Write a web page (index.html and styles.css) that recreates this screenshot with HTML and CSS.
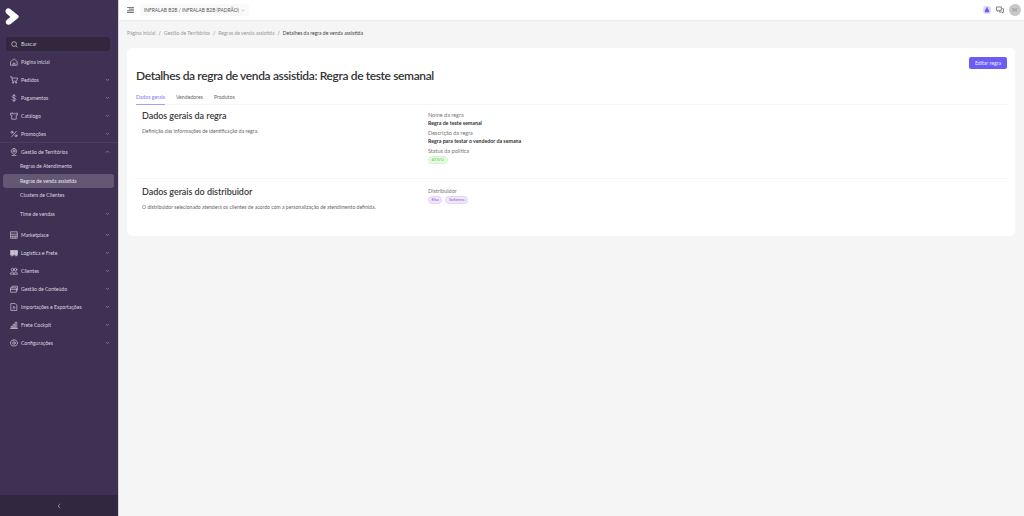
FILE: index.html
```html
<!DOCTYPE html>
<html lang="pt-BR">
<head>
<meta charset="utf-8">
<title>Detalhes da regra de venda assistida</title>
<link rel="stylesheet" href="styles.css">
</head>
<body>
<div class="app">
  <aside class="sidebar">
    <div class="logo-row">
      <svg class="logo" viewBox="0 0 14 17"><path d="M1.2 1.2C2.4-.1 4.200.2 5.200 1.100L12.800 6.900C14 8 14 9.300 12.800 10.300L6 15.800C4.600 17 2.600 17 1.500 15.900C.3 14.600.5 13 1.700 12L5.400 8.900 1.500 5.600C.2 4.500.1 2.400 1.200 1.200Z" fill="#fff"/></svg>
    </div>
    <div class="search">
      <svg class="ico-s" viewBox="0 0 10 10"><circle cx="4.400" cy="4.400" r="3.400"/><path d="M7 7l2.200 2.200"/></svg>
      <span>Buscar</span>
    </div>
    <nav class="nav">
      <a class="item"><svg class="ico" viewBox="0 0 10 10"><path d="M1 4.500 5 1l4 3.500V9H1Z"/><path d="M3.800 9V6.500h2.400V9"/></svg><span class="lbl">Página inicial</span></a>
      <a class="item"><svg class="ico" viewBox="0 0 10 10"><path d="M.5 1h1.700l1 5.500h5L9.500 2.500H2.500"/><circle cx="3.700" cy="8.400" r=".7"/><circle cx="7.500" cy="8.400" r=".7"/></svg><span class="lbl">Pedidos</span><svg class="chev" viewBox="0 0 6 4"><path d="M1 1l2 2 2-2"/></svg></a>
      <a class="item"><svg class="ico" viewBox="0 0 10 10"><path d="M7.200 2.800C6.800 2 6 1.700 5 1.700c-1.300 0-2.200.6-2.200 1.600C2.800 5.500 7.400 4.500 7.400 6.700c0 1-1 1.600-2.400 1.600-1.100 0-2-.4-2.400-1.200M5 .3v9.400"/></svg><span class="lbl">Pagamentos</span><svg class="chev" viewBox="0 0 6 4"><path d="M1 1l2 2 2-2"/></svg></a>
      <a class="item"><svg class="ico" viewBox="0 0 10 10"><path d="M3.200 1.500H.7v2.300h1.500V9h5.600V3.800h1.500V1.500H6.800C6.500 3 3.500 3 3.200 1.500Z"/></svg><span class="lbl">Catálogo</span><svg class="chev" viewBox="0 0 6 4"><path d="M1 1l2 2 2-2"/></svg></a>
      <a class="item item-last"><svg class="ico" viewBox="0 0 10 10"><path d="M8 1.500 2 8.500"/><circle cx="2.500" cy="2.800" r="1.300"/><circle cx="7.500" cy="7.200" r="1.300"/></svg><span class="lbl">Promoções</span><svg class="chev" viewBox="0 0 6 4"><path d="M1 1l2 2 2-2"/></svg></a>
      <a class="item"><svg class="ico" viewBox="0 0 10 10"><path d="M5 .7c2.100 0 3.400 1.500 3.400 3.200C8.400 5.800 6.700 7 5 8 3.300 7 1.600 5.800 1.600 3.900 1.600 2.200 2.900.7 5 .7Z"/><circle cx="5" cy="3.800" r="1.300"/><path d="M2.500 9.300h5"/></svg><span class="lbl">Gestão de Territórios</span><svg class="chev" viewBox="0 0 6 4"><path d="M1 3l2-2 2 2"/></svg></a>
      <div class="subs">
        <a class="sub">Regras de Atendimento</a>
        <a class="sub sub-active">Regras de venda assistida</a>
        <a class="sub">Clusters de Clientes</a>
        <a class="item item-sub"><span class="lbl">Time de vendas</span><svg class="chev" viewBox="0 0 6 4"><path d="M1 1l2 2 2-2"/></svg></a>
      </div>
      <a class="item"><svg class="ico" viewBox="0 0 10 10"><path d="M1 1h8v8H1ZM1 4h8M1 6.500h8M3.500 6.500V9M6.500 6.500V9"/></svg><span class="lbl">Marketplace</span><svg class="chev" viewBox="0 0 6 4"><path d="M1 1l2 2 2-2"/></svg></a>
      <a class="item"><svg class="ico" viewBox="0 0 10 10"><path d="M.5 2h4.500v5H.5ZM5.500 2h4v5h-4Z" fill="#c9c3d3"/><circle cx="2.500" cy="7.900" r="1"/><circle cx="7.500" cy="7.900" r="1"/></svg><span class="lbl">Logística e Frete</span><svg class="chev" viewBox="0 0 6 4"><path d="M1 1l2 2 2-2"/></svg></a>
      <a class="item"><svg class="ico" viewBox="0 0 10 10"><circle cx="3.200" cy="3.300" r="1.700"/><circle cx="6.900" cy="3.300" r="1.700"/><path d="M.5 8.500c0-3 4.500-3 4.500 0ZM5 8.500c0-3 4.500-3 4.500 0Z"/></svg><span class="lbl">Clientes</span><svg class="chev" viewBox="0 0 6 4"><path d="M1 1l2 2 2-2"/></svg></a>
      <a class="item"><svg class="ico" viewBox="0 0 10 10"><path d="M1 3.500h7V9H1ZM2.500 3.500V1.500h7v5H8M1 5.500h7"/></svg><span class="lbl">Gestão de Conteúdo</span><svg class="chev" viewBox="0 0 6 4"><path d="M1 1l2 2 2-2"/></svg></a>
      <a class="item"><svg class="ico" viewBox="0 0 10 10"><path d="M1.500.7H6.500L8.500 2.700V9.300H1.500ZM5 7.500V4.500M3.800 5.700 5 4.500l1.200 1.200"/></svg><span class="lbl">Importações e Exportações</span><svg class="chev" viewBox="0 0 6 4"><path d="M1 1l2 2 2-2"/></svg></a>
      <a class="item"><svg class="ico" viewBox="0 0 10 10"><path d="M.7 9.300h8.600M1.500 9.300V6.500h2v2.800M4 9.300V4h2v5.300M6.500 9.300V1.500h2v7.800"/></svg><span class="lbl">Frete Cockpit</span><svg class="chev" viewBox="0 0 6 4"><path d="M1 1l2 2 2-2"/></svg></a>
      <a class="item"><svg class="ico" viewBox="0 0 10 10"><circle cx="5" cy="5" r="1.600"/><path d="M5 .7l1 .9 1.500-.2.600 1.400 1.300.8-.4 1.400.4 1.400-1.300.8-.6 1.400-1.500-.2-1 .9-1-.9-1.500.2-.6-1.400-1.300-.8.4-1.400-.4-1.400 1.300-.8.6-1.400 1.500.2Z"/></svg><span class="lbl">Configurações</span><svg class="chev" viewBox="0 0 6 4"><path d="M1 1l2 2 2-2"/></svg></a>
    </nav>
    <div class="collapse"><svg class="collapse-ico" viewBox="0 0 5 8"><path d="M4 1 1.300 4 4 7"/></svg></div>
  </aside>
  <div class="main">
    <header class="topbar">
      <svg class="menu" viewBox="0 0 8 7"><path d="M0 .5h8M2 2.500h6M0 4.500h8M0 6.500h8"/></svg>
      <div class="tenant"><span>INFRALAB B2B / INFRALAB B2B (PADRÃO)</span><svg class="tenant-chev" viewBox="0 0 6 4"><path d="M1 1l2 2 2-2"/></svg></div>
      <div class="top-right">
        <svg class="top-ico" viewBox="0 0 10 10"><rect x="0" y="0" width="10" height="10" rx="3" fill="#dcdafc"/><path d="M2 7.800 3 4.200C3.300 3 6.700 3 7 4.200L8 7.800Z" fill="#6c63d9"/><circle cx="5" cy="2.800" r="1.100" fill="#6c63d9"/></svg>
        <svg class="top-ico chat" viewBox="0 0 10 10"><path d="M.7 1.200h6v4.200H3L1.500 6.800V5.400H.7Z"/><path d="M7.800 3.300h1.500v4.200h-.8v1.200L7.200 7.500H4V6.300"/></svg>
        <div class="avatar">M</div>
      </div>
    </header>
    <main class="content">
      <div class="crumbs">
        <span>Página inicial</span><i>/</i><span>Gestão de Territórios</span><i>/</i><span>Regras de venda assistida</span><i>/</i><b>Detalhes da regra de venda assistida</b>
      </div>
      <section class="card">
        <div class="card-actions"><button class="btn">Editar regra</button></div>
        <h1 class="title">Detalhes da regra de venda assistida: Regra de teste semanal</h1>
        <div class="tabs">
          <span class="tab tab-active">Dados gerais</span>
          <span class="tab">Vendedores</span>
          <span class="tab">Produtos</span>
        </div>
        <div class="block block-first">
          <div class="col-left">
            <h2 class="h2">Dados gerais da regra</h2>
            <p class="desc">Definição das informações de identificação da regra.</p>
          </div>
          <div class="col-right">
            <div class="k">Nome da regra</div>
            <div class="v">Regra de teste semanal</div>
            <div class="k">Descrição da regra</div>
            <div class="v">Regra para testar o vendedor da semana</div>
            <div class="k">Status da política</div>
            <div class="tags"><span class="tag tag-green">ATIVO</span></div>
          </div>
        </div>
        <div class="block">
          <div class="col-left">
            <h2 class="h2">Dados gerais do distribuidor</h2>
            <p class="desc">O distribuidor selecionado atenderá os clientes de acordo com a personalização de atendimento definida.</p>
          </div>
          <div class="col-right">
            <div class="k">Distribuidor</div>
            <div class="tags"><span class="tag tag-purple">Elsa</span><span class="tag tag-purple">Sofarma</span></div>
          </div>
        </div>
      </section>
    </main>
  </div>
</div>
</body>
</html>
```
FILE: styles.css
```css
* { box-sizing: border-box; }
html, body { margin: 0; height: 100%; }
body { font-family: Lato, "Liberation Sans", sans-serif; background: #f5f5f5; color: #333; overflow: hidden; }
.app { display: flex; height: 516px; }

.sidebar { width: 119px; flex: none; display: flex; flex-direction: column; background: #3f3154; border-right: 1px solid #d9d6de; }
.logo-row { height: 37px; padding: 8px 0 0 5px; flex: none; }
.logo { width: 14px; height: 17px; display: block; }
.search { flex: none; margin: 0 8px 0 6px; height: 14px; background: #31273f; border-radius: 3px; display: flex; align-items: center; gap: 3px; padding-left: 5px; font-size: 5.300px; color: #d5d0dc; }
.ico-s { width: 7px; height: 7px; fill: none; stroke: #d5d0dc; stroke-width: 1; }
.nav { flex: 1; padding-top: 2px; display: flex; flex-direction: column; }
.item { height: 18px; display: flex; align-items: center; padding: 0 8px 0 10px; font-size: 5.100px; color: #d8d4df; flex: none; }
.item-last { border-bottom: 1px solid #4a3d5e; }
.ico { width: 8px; height: 8px; margin-right: 3px; flex: none; fill: none; stroke: #c9c3d3; stroke-width: .9; stroke-linejoin: round; stroke-linecap: round; }
.lbl { flex: 1; white-space: nowrap; }
.chev { width: 5px; height: 3.500px; fill: none; stroke: #8a8097; stroke-width: 1; flex: none; }
.subs { display: flex; flex-direction: column; margin: -2px 0 3px; }
.sub { height: 14.500px; margin: 0 4px 0 3px; padding-left: 17px; display: flex; align-items: center; font-size: 5.100px; color: #d8d4df; border-radius: 3px; }
.sub-active { background: #625873; color: #e6e3ea; }
.item-sub { padding-left: 20px; margin-top: 2px; }
.collapse { flex: none; height: 21px; background: #31283f; display: flex; align-items: center; justify-content: center; }
.collapse-ico { width: 4px; height: 6px; fill: none; stroke: #a59eb0; stroke-width: 1; }

.main { flex: 1; min-width: 0; display: flex; flex-direction: column; }
.topbar { height: 20px; flex: none; background: #fff; box-shadow: 0 1px 2px rgba(0,0,0,.05); display: flex; align-items: center; padding: 0 3.500px 0 8px; }
.menu { width: 7px; height: 6px; fill: none; stroke: #444; stroke-width: .9; margin-right: 6px; }
.tenant { height: 12px; background: #f9f9f9; border-radius: 3px; display: flex; align-items: center; gap: 2px; padding: 0 4px; font-size: 4.850px; color: #555; white-space: nowrap; }
.tenant-chev { width: 4px; height: 3px; fill: none; stroke: #999; stroke-width: .8; }
.top-right { margin-left: auto; display: flex; align-items: center; gap: 5px; }
.top-ico { width: 8px; height: 8px; display: block; }
.chat { fill: none; stroke: #555; stroke-width: .9; }
.avatar { width: 12px; height: 12px; border-radius: 50%; background: #c8c8c8; color: #888; font-size: 5px; display: flex; align-items: center; justify-content: center; }

.content { flex: 1; padding: 9px 9px 0 8px; }
.crumbs { height: 19px; display: flex; align-items: center; gap: 3px; font-size: 5.050px; color: #999; white-space: nowrap; padding-bottom: 11px; }
.crumbs i { font-style: normal; color: #777; }
.crumbs b { font-weight: 400; color: #444; }
.card { background: #fff; border-radius: 5px; height: 188px; padding: 9px 8px 0 9px; }
.card-actions { display: flex; justify-content: flex-end; height: 12px; }
.btn { border: 0; background: #6c5cf6; color: #f0eeff; font: 5.200px Lato, sans-serif; width: 38px; height: 12px; border-radius: 2px; padding: 0; }
.title { margin: 0; font: 600 12px/14px Lato, sans-serif; color: #333; height: 18px; letter-spacing: -.37px; white-space: nowrap; }
.tabs { display: flex; border-bottom: 1px solid #f5f5f5; height: 18px; gap: 11px; }
.tab { font-size: 5.200px; color: #666; display: flex; align-items: center; padding-top: 2px; margin-bottom: -1px; white-space: nowrap; }
.tab-active { color: #8478f0; border-bottom: 1px solid #a79ff5; width: 29px; justify-content: center; }
.block { display: flex; border-top: 1px solid #f5f5f5; height: 60px; padding: 7px 0 0 6px; }
.block-first { border-top: 0; height: 73px; padding-top: 5px; }
.col-left { width: 286px; flex: none; }
.h2 { margin: 0; font: 600 9px/12px Lato, sans-serif; color: #3a3a3a; letter-spacing: -.05px; white-space: nowrap; }
.desc { margin: 4.500px 0 0; font-size: 5.100px; line-height: 8px; color: #666; white-space: nowrap; }
.col-right { display: flex; flex-direction: column; font-size: 5.500px; padding-top: 1.500px; }
.k { color: #777; line-height: 7px; margin-bottom: 1px; }
.v { color: #333; font-weight: 700; font-size: 5.250px; line-height: 7px; margin-bottom: 3px; }
.tags { display: flex; gap: 3px; }
.tag { height: 8px; padding: 0 2.500px; border-radius: 4px; font-size: 4.300px; display: flex; align-items: center; }
.tag-green { background: #e6fbe0; color: #6cc25a; border: 1px solid #d4f5cc; }
.tag-purple { background: #f1e7fd; color: #8a5bc4; border: 1px solid #e4d3fa; }
```
